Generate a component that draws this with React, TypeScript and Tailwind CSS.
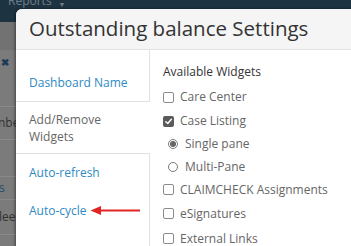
import React from "react";

function Checkbox({ checked }: { checked?: boolean }) {
  if (checked) {
    return (
      <span className="w-[11px] h-[11px] rounded-[2px] bg-[#5a5a5a] flex items-center justify-center shrink-0">
        <svg width="9" height="9" viewBox="0 0 10 10">
          <path d="M2 5.2 L4.2 7.3 L8.2 2.6" fill="none" stroke="#fff" strokeWidth="1.6" strokeLinecap="round" strokeLinejoin="round" />
        </svg>
      </span>
    );
  }
  return <span className="w-[11px] h-[11px] rounded-[2px] border border-[#8a8a8a] bg-white shrink-0" />;
}

function Radio({ checked }: { checked?: boolean }) {
  return (
    <span className="w-[10px] h-[10px] rounded-full border border-[#7a7a7a] bg-white flex items-center justify-center shrink-0">
      {checked ? <span className="w-[6px] h-[6px] rounded-full bg-[#666]" /> : null}
    </span>
  );
}

export default function App() {
  return (
    <div className="relative w-[351px] h-[246px] overflow-hidden bg-[#7b7b7b] font-['Open_Sans',sans-serif]">
      {/* page behind the overlay */}
      <div className="flex flex-col">
        <div className="h-[22px] bg-[#1e3341] flex items-start pl-[8px] gap-[7px] overflow-hidden">
          <span className="text-[12px] leading-[12px] -mt-[5px] text-[#6e7f8b]">Reports</span>
          <span className="text-[7px] leading-[7px] mt-[1px] text-[#6e7f8b]">▼</span>
        </div>
        <div className="w-[16px] overflow-hidden whitespace-nowrap flex flex-col text-[12px]">
          <div className="h-[28px] bg-[#727272]" />
          <div className="h-[24px] flex items-center pl-[1px] text-[#1b3a55] text-[10px] font-bold">✖</div>
          <div className="h-[33px] border-b border-[#8a8a8a]" />
          <div className="h-[33px] border-b border-[#8a8a8a] flex items-center">
            <span className="-ml-[2px] text-[#333]">nbe</span>
          </div>
          <div className="h-[37px] border-b border-[#8a8a8a]" />
          <div className="h-[23px] border-b border-[#8a8a8a] flex items-center">
            <span className="-ml-[1px] text-[#1d4e6e]">s</span>
          </div>
          <div className="h-[35px] border-b border-[#8a8a8a] flex items-center">
            <span className="-ml-[1px] text-[#333]">lee</span>
          </div>
        </div>
      </div>

      {/* modal */}
      <div className="absolute left-[16px] top-[9px] w-[360px] h-[260px] bg-white rounded-tl-[6px] shadow-[-1px_0_3px_rgba(0,0,0,0.45)] flex flex-col">
        <div className="h-[41px] bg-[#f5f5f5] border-b border-[#e2e2e2] rounded-tl-[6px] pl-[13px] pb-[2px] flex items-center text-[20.5px] text-[#333] whitespace-nowrap">
          Outstanding balance Settings
        </div>
        <div className="flex flex-1">
          <div className="w-[134px] flex flex-col text-[12px]">
            <div className="border-r border-b border-[#e2e2e2] pl-[13px] pt-[24px] pb-[9px] leading-[18px] text-[#2d8ac4]">
              Dashboard Name
            </div>
            <div className="pl-[13px] pt-[9px] pb-[8px] leading-[17px] text-[#666]">
              Add/Remove
              <br />
              Widgets
            </div>
            <div className="flex-1 border-t border-r border-[#e2e2e2] pl-[13px] pt-[10px] flex flex-col gap-[20px] leading-[18px] text-[#2d8ac4]">
              <span>Auto-refresh</span>
              <span>Auto-cycle</span>
            </div>
          </div>
          <div className="flex-1 pl-[13px] pt-[13px] flex flex-col text-[12px] whitespace-nowrap">
            <div className="leading-[18px] text-[#333] mb-[4px]">Available Widgets</div>
            <div className="h-[24px] flex items-center gap-[6px] text-[#666]">
              <Checkbox />
              <span>Care Center</span>
            </div>
            <div className="h-[24px] flex items-center gap-[6px] text-[#666]">
              <Checkbox checked />
              <span>Case Listing</span>
            </div>
            <div className="h-[22px] flex items-center gap-[7px] pl-[5px] text-[#666]">
              <Radio checked />
              <span>Single pane</span>
            </div>
            <div className="h-[23px] flex items-center gap-[7px] pl-[5px] text-[#666]">
              <Radio />
              <span>Multi-Pane</span>
            </div>
            <div className="h-[23px] flex items-center gap-[6px] text-[#666]">
              <Checkbox />
              <span>CLAIMCHECK Assignments</span>
            </div>
            <div className="h-[25px] flex items-center gap-[6px] text-[#666]">
              <Checkbox />
              <span>eSignatures</span>
            </div>
            <div className="h-[25px] flex items-center gap-[6px] text-[#666]">
              <Checkbox />
              <span>External Links</span>
            </div>
          </div>
        </div>
      </div>

      {/* annotation arrow */}
      <svg className="absolute left-[88px] top-[203px] pointer-events-none" width="56" height="16" viewBox="0 0 56 16">
        <line x1="10" y1="7.5" x2="52" y2="7.5" stroke="#e12424" strokeWidth="2" />
        <polygon points="2.5,7.5 13,3 13,12" fill="#e12424" />
      </svg>
    </div>
  );
}
